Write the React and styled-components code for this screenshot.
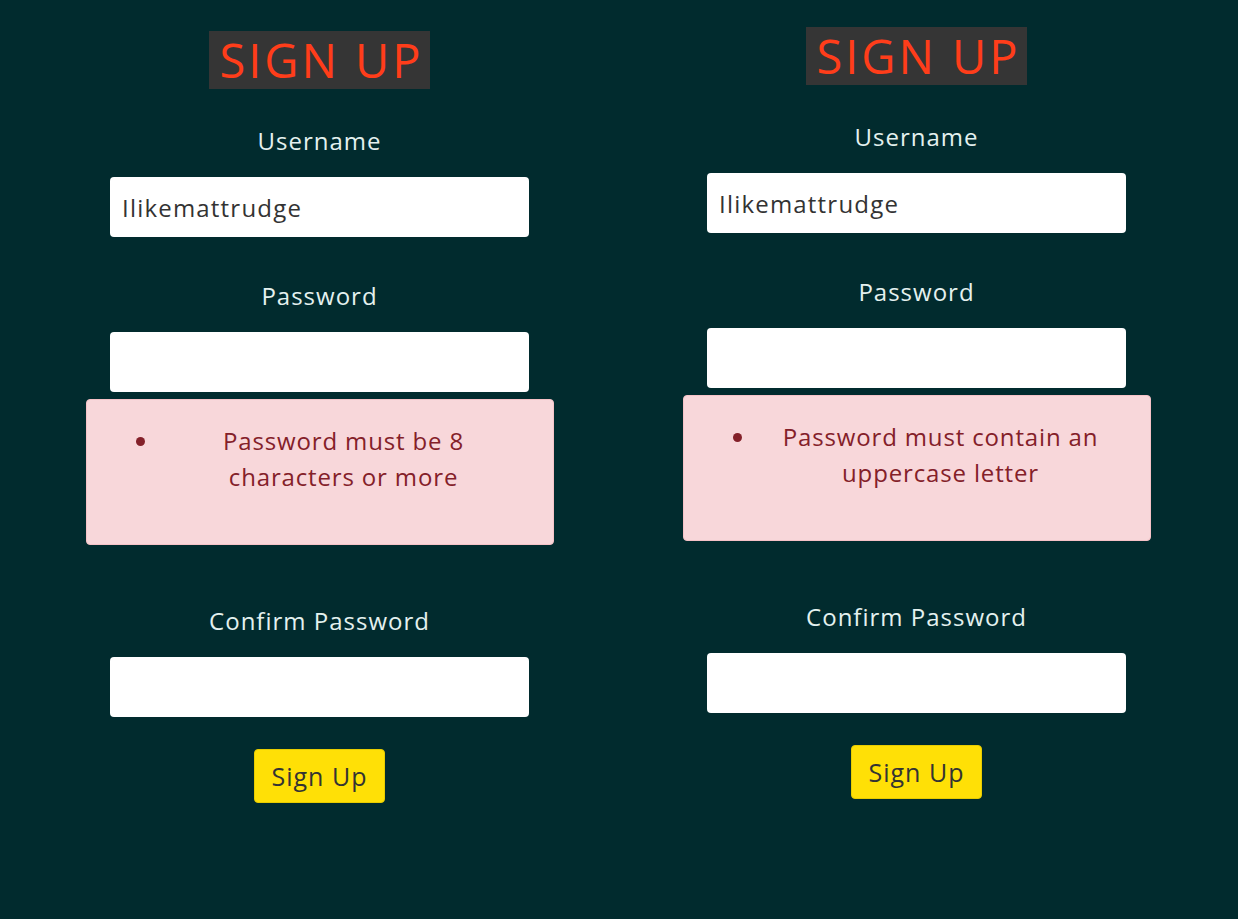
import React from "react";
import styled, { createGlobalStyle } from "styled-components";

const GlobalStyle = createGlobalStyle`
    html, body {
        margin: 0;
        padding: 0;
        background-color: #012b2e;
        min-height: 100%;
    }
    body {
        font-family: "Open Sans", "DejaVu Sans", sans-serif;
    }
    * {
        box-sizing: border-box;
    }
`

const Pagina = styled.div`
    display: flex;
    align-items: flex-start;
    padding: 27px 0 0 21px;
    min-height: 919px;
    background-color: #012b2e;
`

const Coluna = styled.form`
    width: 597px;
    display: flex;
    flex-direction: column;
    align-items: center;
    margin-top: ${(props) => props.$offset || 0}px;
`

const Titulo = styled.h1`
    margin: 0;
    background-color: #353535;
    color: #ff3d1a;
    font-size: 47px;
    font-weight: 400;
    line-height: 58px;
    padding: 0 6px 0 10px;
    letter-spacing: 3px;
`

const Rotulo = styled.label`
    margin-top: ${(props) => props.$top}px;
    color: #e4f1ef;
    font-size: 24px;
    line-height: 30px;
    letter-spacing: 1px;
`

const Campo = styled.input`
    margin-top: 21px;
    width: 419px;
    height: 60px;
    border: none;
    border-radius: 4px;
    padding: 0 12px;
    background-color: #ffffff;
    color: #333333;
    font-family: "Open Sans", "DejaVu Sans", sans-serif;
    font-size: 24px;
    letter-spacing: 1.2px;
    outline: none;
`

const CaixaErro = styled.div`
    margin-top: 7px;
    width: 468px;
    height: 146px;
    background-color: #f8d7da;
    border: 1px solid #f5c2c7;
    border-radius: 4px;
    color: #842029;
    padding: 23px 25px 0;
`

const ListaErro = styled.ul`
    margin: 0;
    padding-left: 48px;
`

const ItemErro = styled.li`
    text-align: center;
    font-size: 24px;
    line-height: 36px;
    letter-spacing: 0.85px;
`

const BotaoCadastrar = styled.button`
    margin-top: 32px;
    width: 131px;
    height: 54px;
    padding: 0;
    background-color: #ffe006;
    color: #333333;
    border: 1px solid #e8cc00;
    border-radius: 4px;
    font-family: "Open Sans", "DejaVu Sans", sans-serif;
    font-size: 25px;
    letter-spacing: 1px;
    cursor: pointer;
`

const formularios = [
    { id: 1, offset: 4, erro: "Password must be 8 characters or more" },
    { id: 2, offset: 0, erro: "Password must contain an uppercase letter" },
]

export default class App extends React.Component {
    state = {
        username: "Ilikemattrudge",
    }

    handleUsername = (event) => {
        this.setState({ username: event.target.value })
    }

    render() {
        const colunas = formularios.map((form) => {
            return (
                <Coluna key={form.id} $offset={form.offset} onSubmit={(e) => e.preventDefault()}>
                    <Titulo>SIGN UP</Titulo>
                    <Rotulo $top={37}>Username</Rotulo>
                    <Campo value={this.state.username} onChange={this.handleUsername} />
                    <Rotulo $top={44}>Password</Rotulo>
                    <Campo type="password" defaultValue="" />
                    <CaixaErro>
                        <ListaErro>
                            <ItemErro>{form.erro}</ItemErro>
                        </ListaErro>
                    </CaixaErro>
                    <Rotulo $top={61}>Confirm Password</Rotulo>
                    <Campo type="password" defaultValue="" />
                    <BotaoCadastrar type="submit">Sign Up</BotaoCadastrar>
                </Coluna>
            )
        })

        return (
            <Pagina>
                <GlobalStyle />
                {colunas}
            </Pagina>
        )
    }
}
